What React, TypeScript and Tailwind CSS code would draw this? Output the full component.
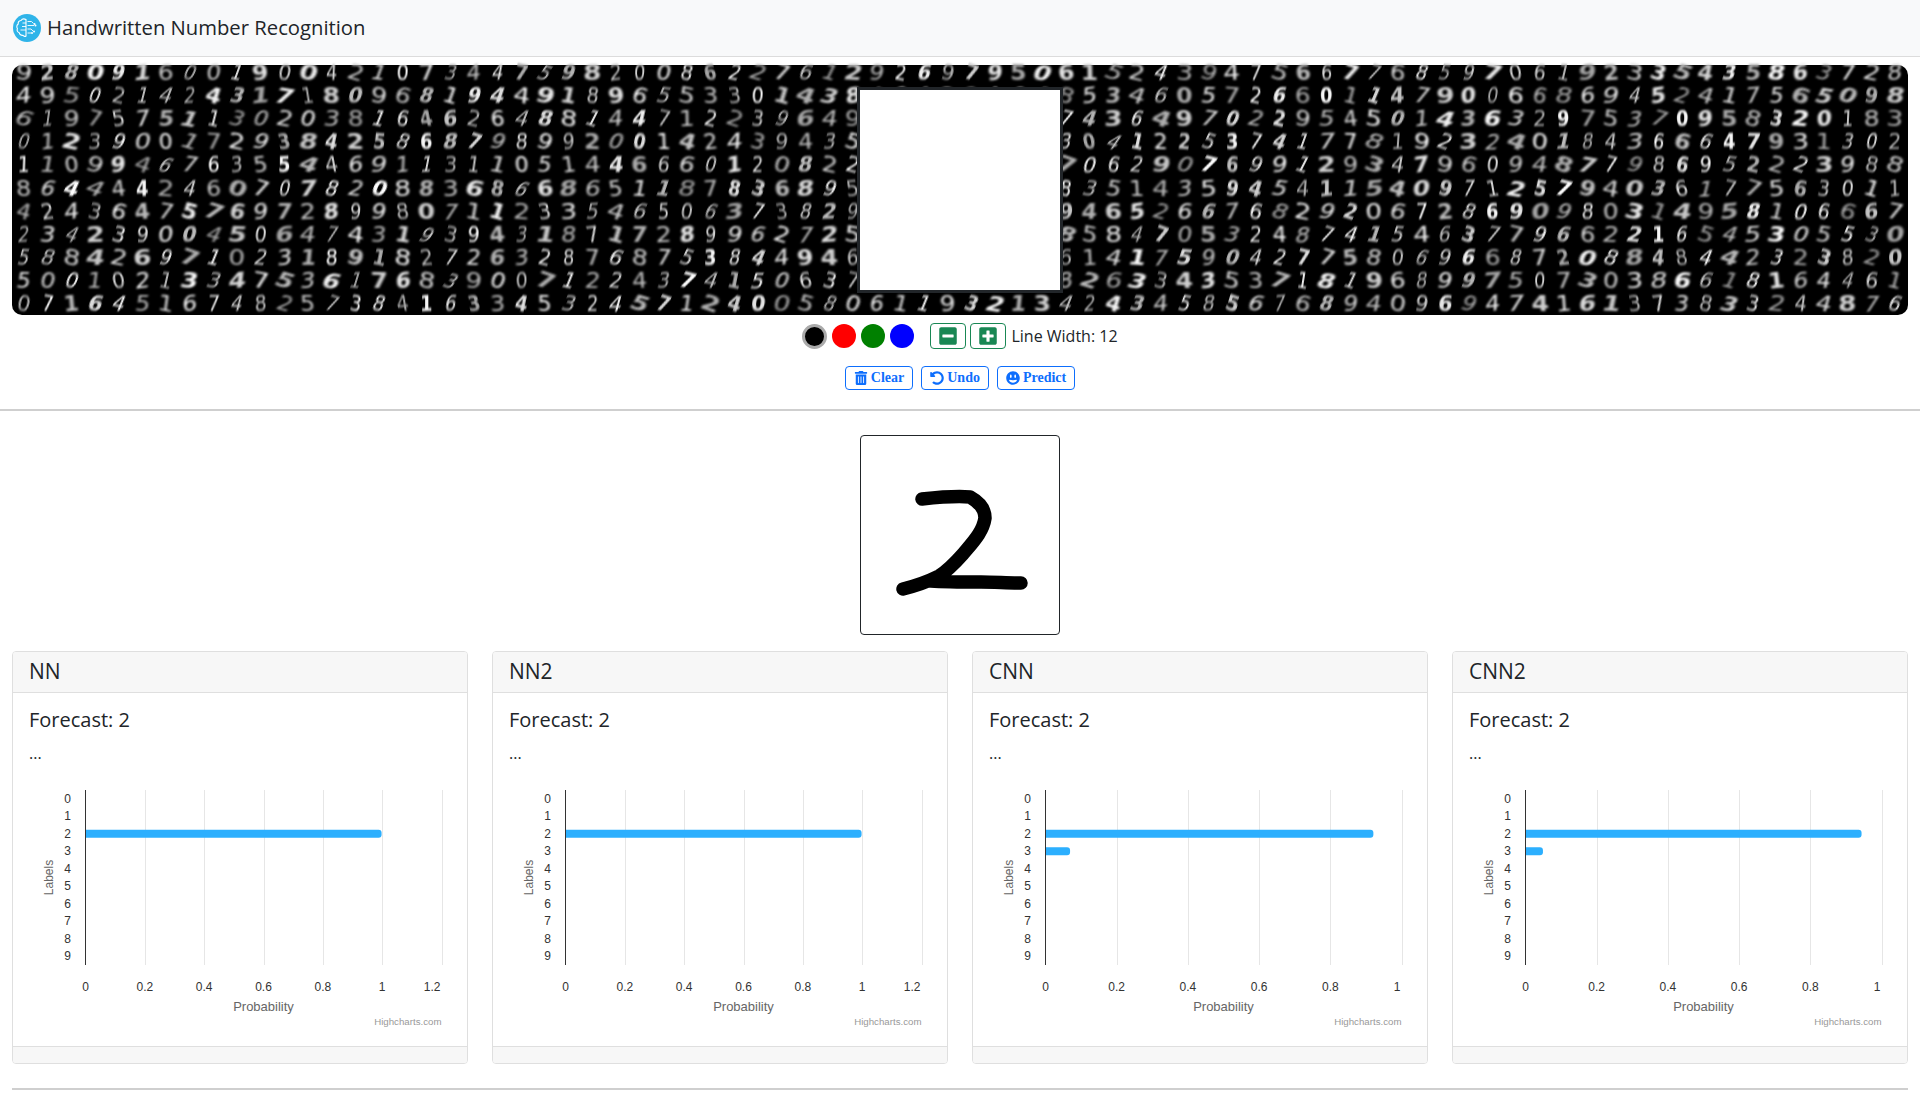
import React from 'react';
import { FaTrashAlt, FaUndoAlt, FaGrinAlt, FaMinusSquare, FaPlusSquare } from 'react-icons/fa';

// mnist strip, 80 columns by 11 rows. columns 36-43 sit under the canvas
const DIGITS = [
  '92809160019004210734' + '47598200862276129269' + '7950' + '615243947566776859' + '706192335435863728',
  '49502142431718096819' + '44918965533014380000' + '0000' + '853460572660114790' + '066869452417565098',
  '61975751130203816462' + '64881447122396490000' + '0000' + '743649702295450143' + '632975370958320183',
  '01239001729384258687' + '98992001424394350000' + '0000' + '304122537417781923' + '240184366647931302',
  '11099467635544691131' + '10514466601208220000' + '0000' + '706290769912934796' + '094877986952223988',
  '86444424607078208836' + '86686511878368950000' + '0000' + '835143594541154097' + '125794036177563011',
  '42436475769728998071' + '12335465063738290000' + '0000' + '946526676829206728' + '690980314958106667',
  '23423900450647431939' + '43187172899627250000' + '0000' + '858470532487415463' + '779662216545305530',
  '58842697102318918272' + '63287687538449460000' + '0000' + '614175904277580696' + '687208848442323820',
  '50010213347536176839' + '00712243741506370000' + '0000' + '826334353718196899' + '750730386618164461',
  '07164516748257384163' + '34532457124005806119' + '3213' + '424345856768940969' + '474161373833244876',
];

const DigitStrip = () => (
  <div className="-mt-[3px] grid grid-cols-[repeat(80,23.7px)] auto-rows-[23.1px] items-center justify-items-center">
    {DIGITS.flatMap((row, r) =>
      row.split('').map((d, c) => {
        const h = (r * 37 + c * 101 + Number(d) * 13) % 97;
        const tilt = (h % 29) - 8;
        const skew = -((h % 19) - 3);
        const bright = 165 + (h * 7) % 90;
        const sx = 0.85 + ((h % 7) * 0.07);
        return (
          <span
            key={`${r}-${c}`}
            className={`block h-[17px] font-['DejaVu_Sans',sans-serif] text-[21px] leading-[17px] blur-[0.8px] ${h % 3 === 0 ? 'font-bold' : 'font-normal'}`}
            style={{
              color: `rgb(${bright},${bright},${bright})`,
              transform: `rotate(${tilt}deg) skewX(${skew}deg) scaleX(${sx})`,
            }}
          >
            {d}
          </span>
        );
      }),
    )}
  </div>
);

const Logo = () => (
  <svg viewBox="0 0 28 28" className="w-7 h-7 shrink-0">
    <circle cx="14" cy="14" r="14" fill="#2fb4e9" />
    <path
      d="M13 5.500c-2-1-4-.5-5 1-1.800.3-3 1.800-2.800 3.500-1.500 1-1.800 3.200-.8 4.500-.6 1.800.2 3.600 1.800 4.200.3 1.800 2 3 3.800 2.600 1 1.200 2.200 1.400 3 .7z"
      fill="none"
      stroke="#fff"
      strokeWidth="1.100"
    />
    <path
      d="M13 9H9.500M9 12.500h4M7.500 16H13M14.500 7.500h4l2 2M14.500 11.500h6.500M14.500 15h3.500l2 2M14.500 19h3.500"
      fill="none"
      stroke="#fff"
      strokeWidth="0.900"
    />
    <circle cx="21.500" cy="10" r="1" fill="#fff" />
    <circle cx="22.500" cy="11.500" r="1" fill="#fff" />
    <circle cx="21" cy="17.500" r="1" fill="#fff" />
    <circle cx="19" cy="19" r="1" fill="#fff" />
  </svg>
);

const ColorDot = ({ className }: { className: string }) => (
  <span className={`block w-6 h-6 rounded-full ${className}`} />
);

const ActionButton = ({ icon, label }: { icon: React.ReactNode; label: string }) => (
  <button className="h-6 px-2 flex items-center gap-[3px] rounded-[4px] border border-[#0d6efd] text-[#0d6efd] font-['Liberation_Serif',serif] font-bold text-[14px] leading-none">
    {icon}
    {label}
  </button>
);

type ChartProps = { max: number; values: [number, number][] };

const PLOT_L = 56.5;
const PLOT_R = 412.5;
const PLOT_T = 10;
const PLOT_B = 185;

const Chart = ({ max, values }: ChartProps) => {
  const w = PLOT_R - PLOT_L;
  const x = (v: number) => PLOT_L + (v / max) * w;
  const ticks = max > 1 ? [0, 0.2, 0.4, 0.6, 0.8, 1, 1.2] : [0, 0.2, 0.4, 0.6, 0.8, 1];
  const band = (PLOT_B - PLOT_T) / 10;
  return (
    <svg width="422" height="250" viewBox="0 0 422 250" className="block font-['Liberation_Sans',sans-serif]">
      {ticks.map((t) =>
        t === 0 ? null : (
          <line key={t} x1={Math.round(x(t)) + 0.5} x2={Math.round(x(t)) + 0.5} y1={PLOT_T} y2={PLOT_B} stroke="#e6e6e6" />
        ),
      )}
      {values.map(([i, v]) => {
        const cy = PLOT_T + band * (i + 0.5);
        const end = x(v);
        return (
          <path
            key={i}
            fill="#2caffe"
            d={`M${PLOT_L} ${cy - 4}H${end - 3}a3 3 0 0 1 3 3v2a3 3 0 0 1-3 3H${PLOT_L}z`}
          />
        );
      })}
      <line x1={PLOT_L} x2={PLOT_L} y1={PLOT_T} y2={PLOT_B} stroke="#333" />
      {Array.from({ length: 10 }, (_, i) => (
        <text key={i} x="42" y={PLOT_T + band * (i + 0.5) + 4} textAnchor="end" fontSize="12" fill="#333">
          {i}
        </text>
      ))}
      {ticks.map((t, i) => {
        const last = i === ticks.length - 1;
        return (
          <text
            key={t}
            x={last ? PLOT_R - 1 : x(t)}
            y="211"
            textAnchor={last ? 'end' : 'middle'}
            fontSize="12"
            fill="#333"
          >
            {t}
          </text>
        );
      })}
      <text x={PLOT_L + w / 2} y="231" textAnchor="middle" fontSize="13" fill="#666">
        Probability
      </text>
      <text
        transform={`translate(24 ${(PLOT_T + PLOT_B) / 2}) rotate(-90)`}
        textAnchor="middle"
        fontSize="12"
        fill="#666"
      >
        Labels
      </text>
      <text x={PLOT_R} y="245" textAnchor="end" fontSize="9.700" fill="#999">
        Highcharts.com
      </text>
    </svg>
  );
};

const MODELS: { name: string; max: number; values: [number, number][] }[] = [
  { name: 'NN', max: 1.2, values: [[2, 0.998]] },
  { name: 'NN2', max: 1.2, values: [[2, 0.998]] },
  { name: 'CNN', max: 1, values: [[2, 0.921], [3, 0.069]] },
  { name: 'CNN2', max: 1, values: [[2, 0.944], [3, 0.049]] },
];

const ModelCard = ({ name, max, values }: (typeof MODELS)[number]) => (
  <div className="h-[413px] flex flex-col rounded-[4px] border border-[#dfdfdf] overflow-hidden">
    <h5 className="h-[41px] px-4 pt-[7px] bg-[#f7f7f7] border-b border-[#dfdfdf] text-[21px] leading-6">{name}</h5>
    <div className="flex-1 px-4 pt-[15px]">
      <h5 className="text-[20px] leading-6 mb-[9px]">Forecast: 2</h5>
      <p className="text-[16px] leading-6 mb-[15px]">...</p>
      <Chart max={max} values={values} />
    </div>
    <div className="h-[17px] bg-[#f7f7f7] border-t border-[#dfdfdf]" />
  </div>
);

export default function App() {
  return (
    <div className="w-[1920px] h-[1112px] overflow-hidden bg-white text-[#212529] font-['Open_Sans',sans-serif]">
      <nav className="h-[57px] px-[13px] flex items-center gap-[6px] bg-[#f8f9fa] border-b border-[#dcdcdc]">
        <Logo />
        <span className="-mt-[2px] text-[20.250px]">Handwritten Number Recognition</span>
      </nav>

      <div className="px-3">
        <div className="relative flow-root mt-2 h-[250px] rounded-[10px] bg-black">
          <DigitStrip />
          <div className="absolute left-[845px] top-[22px] w-[206px] h-[206px] bg-white border-[3px] border-[#212529]" />
        </div>

        <div className="mt-2 h-[26px] flex items-center justify-center">
          <div className="flex items-center gap-[5px]">
            <span className="block w-[25px] h-[25px] rounded-full bg-black border-[3px] border-[#aaaaaa]" />
            <ColorDot className="bg-[#ff0000]" />
            <ColorDot className="bg-[#008000]" />
            <ColorDot className="bg-[#0000ff]" />
          </div>
          <button className="ml-4 w-9 h-[26px] flex items-center justify-center rounded-[4px] border border-[#198754] text-[#198754]">
            <FaMinusSquare size={20} />
          </button>
          <button className="ml-1 w-9 h-[26px] flex items-center justify-center rounded-[4px] border border-[#198754] text-[#198754]">
            <FaPlusSquare size={20} />
          </button>
          <span className="ml-[5px] text-[16px]">Line Width: 12</span>
        </div>

        <div className="mt-[17px] flex justify-center gap-2">
          <ActionButton icon={<FaTrashAlt size={14} />} label="Clear" />
          <ActionButton icon={<FaUndoAlt size={14} />} label="Undo" />
          <ActionButton icon={<FaGrinAlt size={14} />} label="Predict" />
        </div>
      </div>

      <hr className="mt-[19px] border-t-2 border-[#cfcfcf]" />

      <div className="px-3">
        <div className="mt-6 mx-auto relative w-[200px] h-[200px] rounded-[4px] border border-[#212529]">
          <svg viewBox="0 0 198 198" className="w-full h-full">
            <path
              d="M61 63C80 61 98 60 109 61C118 66 124 72 124 82C122 96 112 106 102 118C94 127 86 135 78 140C66 146 54 150 42 153M70 145C84 146 100 146 120 146C134 146 146 147 160 147"
              fill="none"
              stroke="#000"
              strokeWidth="13.500"
              strokeLinecap="round"
              strokeLinejoin="round"
            />
          </svg>
        </div>

        <div className="mt-4 grid grid-cols-4 gap-6">
          {MODELS.map((m) => (
            <ModelCard key={m.name} {...m} />
          ))}
        </div>

        <hr className="mt-6 border-t-2 border-[#cfcfcf]" />
      </div>
    </div>
  );
}
